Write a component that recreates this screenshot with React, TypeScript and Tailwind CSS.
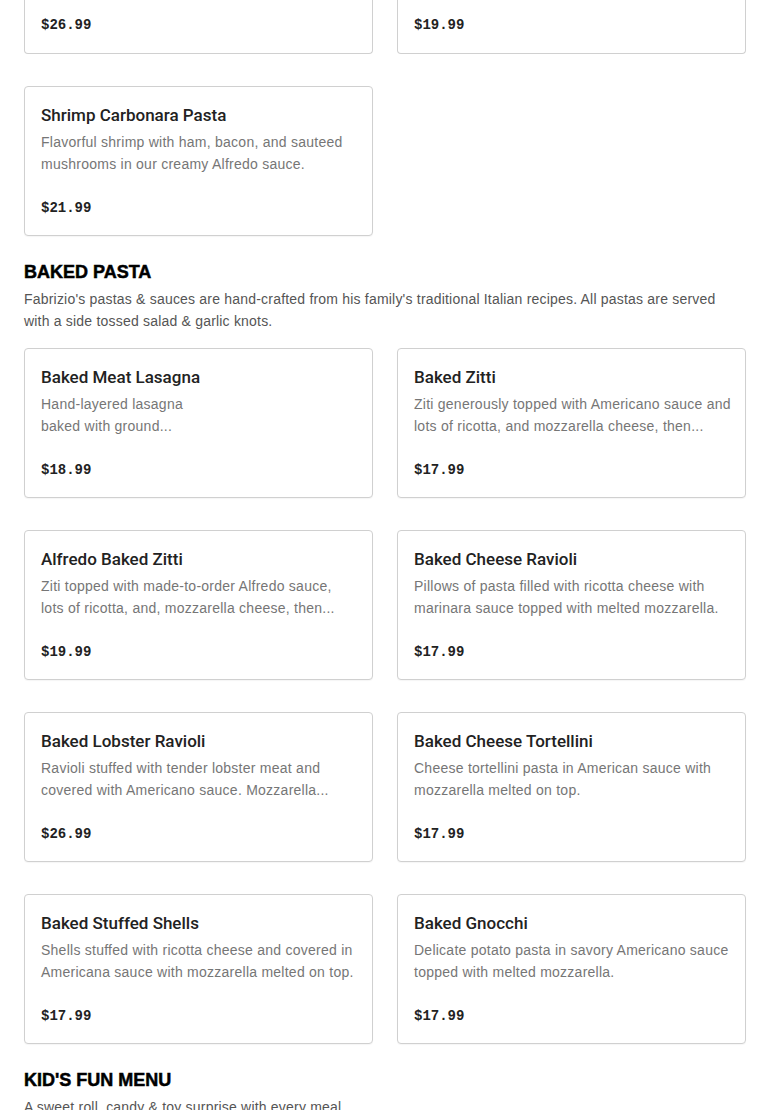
import React from 'react';

interface MenuItem {
    name: string;
    lines: string[];
    price: string;
}

interface MenuSection {
    title: string;
    description?: string;
    items: MenuItem[];
}

// bottom of the previous section: only the prices of the first row show
const PREVIOUS_PRICES = ['$26.99', '$19.99'];

const PREVIOUS_ITEMS: MenuItem[] = [
    { name: 'Shrimp Carbonara Pasta', lines: ['Flavorful shrimp with ham, bacon, and sauteed', 'mushrooms in our creamy Alfredo sauce.'], price: '$21.99' },
];

const BAKED_PASTA: MenuSection = {
    title: 'BAKED PASTA',
    description: "Fabrizio's pastas & sauces are hand-crafted from his family's traditional Italian recipes. All pastas are served with a side tossed salad & garlic knots.",
    items: [
        { name: 'Baked Meat Lasagna', lines: ['Hand-layered lasagna', 'baked with ground...'], price: '$18.99' },
        { name: 'Baked Zitti', lines: ['Ziti generously topped with Americano sauce and', 'lots of ricotta, and mozzarella cheese, then...'], price: '$17.99' },
        { name: 'Alfredo Baked Zitti', lines: ['Ziti topped with made-to-order Alfredo sauce,', 'lots of ricotta, and, mozzarella cheese, then...'], price: '$19.99' },
        { name: 'Baked Cheese Ravioli', lines: ['Pillows of pasta filled with ricotta cheese with', 'marinara sauce topped with melted mozzarella.'], price: '$17.99' },
        { name: 'Baked Lobster Ravioli', lines: ['Ravioli stuffed with tender lobster meat and', 'covered with Americano sauce. Mozzarella...'], price: '$26.99' },
        { name: 'Baked Cheese Tortellini', lines: ['Cheese tortellini pasta in American sauce with', 'mozzarella melted on top.'], price: '$17.99' },
        { name: 'Baked Stuffed Shells', lines: ['Shells stuffed with ricotta cheese and covered in', 'Americana sauce with mozzarella melted on top.'], price: '$17.99' },
        { name: 'Baked Gnocchi', lines: ['Delicate potato pasta in savory Americano sauce', 'topped with melted mozzarella.'], price: '$17.99' },
    ],
};

const Price: React.FC<{ value: string }> = ({ value }) => (
    <span className="text-[14px] leading-[22px] font-bold text-[#222] font-['Liberation_Mono',monospace]">{value}</span>
);

const MenuCard: React.FC<{ item: MenuItem }> = ({ item }) => (
    <div className="h-[150px] flex flex-col border border-[#d0d0d0] rounded-[4px] bg-white px-4 pt-[15px] pb-[16px] shadow-[0_1px_1px_rgba(0,0,0,0.04)]">
        <h3 className="text-[17px] leading-[26px] font-medium text-[#222] font-['Roboto',sans-serif]">{item.name}</h3>
        <p className="mt-[3px] text-[14px] leading-[22px] tracking-[0.25px] text-[#767676] whitespace-nowrap">
            {item.lines.map((line, i) => (
                <React.Fragment key={i}>
                    {i > 0 && <br />}
                    {line}
                </React.Fragment>
            ))}
        </p>
        <div className="mt-auto">
            <Price value={item.price} />
        </div>
    </div>
);

const CardGrid: React.FC<{ items: MenuItem[] }> = ({ items }) => (
    <div className="grid grid-cols-2 gap-x-6 gap-y-8">
        {items.map((item) => (
            <MenuCard key={item.name} item={item} />
        ))}
    </div>
);

const SectionHeader: React.FC<{ title: string; description?: string }> = ({ title, description }) => (
    <div className="mb-4">
        <h2 className="text-[18px] leading-[24px] font-bold text-black [-webkit-text-stroke:0.5px_black]">{title}</h2>
        {description && (
            <p className="mt-1 max-w-[700px] text-[14px] leading-[22px] tracking-[0.2px] text-[#555]">{description}</p>
        )}
    </div>
);

export default function App() {
    return (
        <div className="min-h-screen bg-white px-6 font-['Liberation_Sans',Arial,sans-serif] overflow-hidden">
            <div className="grid grid-cols-2 gap-x-6">
                {PREVIOUS_PRICES.map((price) => (
                    <div key={price} className="h-[54px] flex flex-col justify-end border border-t-0 border-[#d0d0d0] rounded-b-[4px] px-4 pb-[17px]">
                        <Price value={price} />
                    </div>
                ))}
            </div>

            <div className="mt-8">
                <CardGrid items={PREVIOUS_ITEMS} />
            </div>

            <section className="mt-6">
                <SectionHeader title={BAKED_PASTA.title} description={BAKED_PASTA.description} />
                <CardGrid items={BAKED_PASTA.items} />
            </section>

            <section className="mt-6">
                <SectionHeader title="KID'S FUN MENU" description="A sweet roll, candy & toy surprise with every meal." />
            </section>
        </div>
    );
}
